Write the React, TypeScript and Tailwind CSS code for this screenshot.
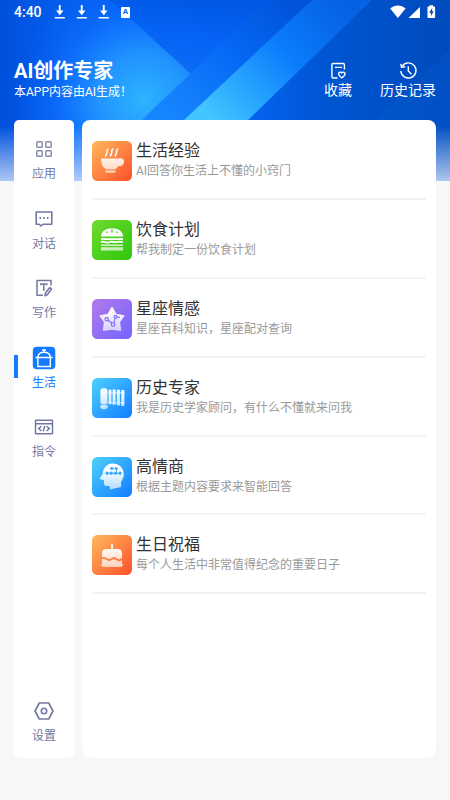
import type { ReactNode } from "react";

interface NavItem {
  icon: ReactNode;
  label: string;
}

interface Topic {
  colors: [string, string];
  desc: string;
  glyph: (fill: string, hole: string) => ReactNode;
  id: string;
  title: string;
}

const NAV_ITEMS: NavItem[] = [
  {
    label: "应用",
    icon: (
      <g fill="none" stroke="#8a8fac" strokeWidth="1.5">
        <rect height="5.4" rx="0.8" width="5.4" x="4.8" y="4.8" />
        <rect height="5.4" rx="0.8" width="5.4" x="13.8" y="4.8" />
        <rect height="5.4" rx="0.8" width="5.4" x="4.8" y="13.8" />
        <rect height="5.4" rx="0.8" width="5.4" x="13.8" y="13.8" />
      </g>
    ),
  },
  {
    label: "对话",
    icon: (
      <g fill="none" stroke="#7378a3" strokeWidth="1.6">
        <path d="M4.2 5h15.6v12.2H11l-2 1.8-1.8-1.8h-3z" strokeLinejoin="round" />
        <path d="M8.3 10v2M12 10v2M15.7 10v2" />
      </g>
    ),
  },
  {
    label: "写作",
    icon: (
      <g fill="none" stroke="#7378a3" strokeWidth="1.5">
        <path d="M19 9.5V4.4H5v14.8h6" strokeLinejoin="round" />
        <path d="M8.800 9.200V8h6v1.200M11.800 8v7" />
        <path
          d="m17.800 11.500 1.800 1.300-4.300 6-2.300.9.3-2.400z"
          strokeLinejoin="round"
        />
      </g>
    ),
  },
  {
    label: "生活",
    icon: (
      <>
        <rect fill="#127bff" height="22.5" rx="4" width="22.5" x="0.8" y="0.8" />
        <g fill="none" stroke="#fff" strokeWidth="1.4">
          <path d="M10 4h4M12 4v2.500M5.800 11.200c.3-2.800 2.600-4.900 6.300-4.900s6 2.100 6.300 4.900" />
          <path d="M3.500 11.500h17.200M5.900 11.500v9h12.400v-9" />
        </g>
      </>
    ),
  },
  {
    label: "指令",
    icon: (
      <g fill="none" stroke="#7378a3" strokeWidth="1.5">
        <rect height="13.6" rx="0.6" width="17" x="3.5" y="5.2" />
        <path d="M3.500 8.800h17M9.300 11.200l-2.600 2.400 2.600 2.400M14.700 11.200l2.600 2.400-2.600 2.400M12.800 11l-1.600 5.200" />
      </g>
    ),
  },
];

const TOPICS: Topic[] = [
  {
    id: "life",
    title: "生活经验",
    desc: "AI回答你生活上不懂的小窍门",
    colors: ["#ffb95c", "#fb5029"],
    glyph: (fill) => (
      <>
        <path
          d="M16 8c-2.500 2.300.5 3.500-2.500 7M20.800 8c-2.500 2.300.5 3.500-2.500 7M25.600 8c-2.500 2.300.5 3.500-2.500 7"
          fill="none"
          stroke="#fff"
          strokeLinecap="round"
          strokeWidth="1.6"
        />
        <path
          d="M9 17.500h18c3-.8 5.500 1 5 4-.5 3-3 4-6 3.700-1 2-2.500 3.300-4.500 3.300H16c-4.500 0-7-5-7-11z"
          fill={fill}
        />
        <path d="M13 29.500h11l-1 2.300h-9z" fill={fill} />
      </>
    ),
  },
  {
    id: "diet",
    title: "饮食计划",
    desc: "帮我制定一份饮食计划",
    colors: ["#70da30", "#2fc60c"],
    glyph: (fill, hole) => (
      <>
        <path
          d="M9 16.500C9.500 11 14 8.300 20 8.300s10.700 2.700 11 8.200z"
          fill="#fff"
        />
        <path
          d="M15 12v.5M20 10v2M25 12v.5"
          stroke={hole}
          strokeLinecap="round"
          strokeWidth="1.3"
        />
        <path d="M9 18.200h22v1.800H9z" fill="#fff" />
        <path
          d="M9 22.200c3-2.200 5 1.800 8 0s4 .5 6.500 0 4.500-1 7.500 0"
          fill="none"
          stroke="#fff"
          strokeWidth="1.7"
        />
        <path d="M9 24.600h22v1.500H9zM9 27.300h22v3.200H9z" fill={fill} />
      </>
    ),
  },
  {
    id: "star",
    title: "星座情感",
    desc: "星座百科知识，星座配对查询",
    colors: ["#b17be8", "#7464ff"],
    glyph: (fill, hole) => (
      <>
        <path
          d="M20 8l4.200 7.300 8 1.400-4.500 6.300 1 8.500-8.700-1.200-8.700 1.200 1-8.500-4.500-6.300 8-1.400z"
          fill={fill}
          stroke={fill}
          strokeLinejoin="round"
          strokeWidth="0.8"
        />
        <path
          d="m14.700 20.300 6.600 5 2.400-7.600 4.300.8"
          fill="none"
          stroke={hole}
          strokeWidth="1.1"
        />
        <g fill="#e9e4ff" stroke={hole} strokeWidth="1.1">
          <circle cx="14.700" cy="20.300" r="1.700" />
          <circle cx="21" cy="25.500" r="1.700" />
          <circle cx="23.500" cy="17.700" r="1.500" />
        </g>
      </>
    ),
  },
  {
    id: "history",
    title: "历史专家",
    desc: "我是历史学家顾问，有什么不懂就来问我",
    colors: ["#4ed1ff", "#127cff"],
    glyph: (fill) => (
      <>
        <rect fill={fill} height="16" rx="2.5" width="7" x="8.4" y="10.3" />
        <ellipse cx="12" cy="28.8" fill={fill} rx="3.800" ry="2.400" />
        <path d="M15.400 14h17v1.500h-17zM15.400 24h17v1.500h-17z" fill="#fff" opacity="0.5" />
        <path
          d="M16.600 11.800h2.800v14.400h-2.800zM20.600 11.500h3v15.200h-3zM24.900 11.800h3v15.600h-3zM29.200 12h3.200v16h-3.200z"
          fill={fill}
        />
      </>
    ),
  },
  {
    id: "eq",
    title: "高情商",
    desc: "根据主题内容要求来智能回答",
    colors: ["#4ed1ff", "#127cff"],
    glyph: (fill) => (
      <>
        <path
          d="M20.500 6.500c6.500 0 11.300 4.500 11.300 10.500 0 5-2.500 6-2.700 9v4L18 32.500l-.5-3.500c-3 .3-5.500 0-5.500-2v-3.500l-4.500-1.700 3.300-4.800c.2-6 4.200-10.500 9.700-10.500z"
          fill={fill}
        />
        <g fill="#30a5ff" stroke="#30a5ff">
          <path d="M15 16.300h14M19.500 11.500h5v4.800" fill="none" strokeWidth="0.8" />
          <path
            d="M14 15.200h2v2h-2zM18.200 15.200h2v2h-2zM22.700 15.200h2v2h-2zM27 15.200h2v2h-2zM18.700 10.700h2v1.600h-2zM23.500 10.700h1.800v1.600h-1.800z"
            strokeWidth="0.8"
          />
        </g>
      </>
    ),
  },
  {
    id: "birthday",
    title: "生日祝福",
    desc: "每个人生活中非常值得纪念的重要日子",
    colors: ["#ffb95c", "#fb5029"],
    glyph: (fill) => (
      <>
        <path d="M20 8.500c1.500 1.700 1 2.500.8 3V14h-1.600v-2.500c-.4-.7-.5-1.500.8-3z" fill="#fff" />
        <path
          d="M10 22.500V18c0-2.500 1.500-4 4-4h12c2.500 0 4 1.500 4 4v4.500c-2 3-4.500 1.500-6.500 0-2.500-1.500-4 2-6.500 1.500S13 21 10 22.500z"
          fill={fill}
        />
        <path
          d="M10 24.500c3-1.500 4.500 1.500 7 1.500s4-2.700 6.500-1.200 4.500 2 6.500.2v4h1.300c-.3 2-1.300 3-3.300 3H12c-2 0-3-1-3.300-3H10z"
          fill={fill}
        />
      </>
    ),
  },
];

function Backdrop() {
  return (
    <svg
      aria-hidden="true"
      className="absolute inset-0 h-full w-full"
      preserveAspectRatio="none"
      viewBox="0 0 450 181"
    >
      <defs>
        <linearGradient id="sky" x1="0" x2="1" y1="0" y2="0">
          <stop offset="0" stopColor="#0050dc" />
          <stop offset="0.15" stopColor="#045ff0" />
          <stop offset="0.5" stopColor="#0568fa" />
          <stop offset="0.72" stopColor="#0056d2" />
          <stop offset="1" stopColor="#004abd" />
        </linearGradient>
        <radialGradient
          cx="143"
          cy="100"
          gradientUnits="userSpaceOnUse"
          id="glow"
          r="130"
        >
          <stop offset="0" stopColor="#2db4ff" />
          <stop offset="0.35" stopColor="#2499ff" stopOpacity="0.9" />
          <stop offset="0.7" stopColor="#0f6eff" stopOpacity="0.6" />
          <stop offset="1" stopColor="#0560f2" stopOpacity="0" />
        </radialGradient>
        <linearGradient
          gradientUnits="userSpaceOnUse"
          id="wedge"
          x1="200"
          x2="190"
          y1="0"
          y2="75"
        >
          <stop offset="0" stopColor="#0058e4" />
          <stop offset="0.5" stopColor="#0563f6" />
          <stop offset="1" stopColor="#0d6cf5" />
        </linearGradient>
        <linearGradient
          gradientUnits="userSpaceOnUse"
          id="band"
          x1="290"
          x2="160"
          y1="0"
          y2="120"
        >
          <stop offset="0" stopColor="#0052d8" />
          <stop offset="0.45" stopColor="#0569f5" />
          <stop offset="0.8" stopColor="#147efb" />
          <stop offset="1" stopColor="#1687ff" />
        </linearGradient>
        <linearGradient
          gradientUnits="userSpaceOnUse"
          id="beam"
          x1="335"
          x2="205"
          y1="0"
          y2="125"
        >
          <stop offset="0" stopColor="#0562e2" />
          <stop offset="0.4" stopColor="#0b7cfc" />
          <stop offset="0.7" stopColor="#27a5ff" />
          <stop offset="0.95" stopColor="#42c6ff" />
        </linearGradient>
        <linearGradient id="fade" x1="0" x2="0" y1="0" y2="1">
          <stop offset="0" stopColor="#f7f9ff" stopOpacity="0" />
          <stop offset="1" stopColor="#f7f9ff" stopOpacity="0.7" />
        </linearGradient>
      </defs>
      <path d="M0 0h450v181H0z" fill="url(#sky)" />
      <path d="M0 0h270L155 110 100 181H0z" fill="url(#glow)" />
      <path d="M110 0h160l-79 74z" fill="url(#wedge)" />
      <path d="M270 0h42L185 119l-66 62H82l73-74z" fill="url(#band)" />
      <path d="M312 0h60L248 120l-60 61h-69l66-62z" fill="url(#beam)" />
      <path d="M450 50v131H310z" fill="#075bd2" opacity="0.35" />
      <path d="M0 126h450v55H0z" fill="url(#fade)" />
    </svg>
  );
}

function StatusBar() {
  return (
    <div className="flex h-6 items-center px-[14px]">
      <span className="w-[40px] font-medium text-[14px] leading-6">4:40</span>
      <div className="flex items-center gap-[10px]">
        {[0, 1, 2].map((n) => (
          <svg aria-hidden="true" className="h-4 w-3" key={n} viewBox="0 0 12 16">
            <path
              d="M4.800 1h1.900v5.500h2.800L5.800 11.200 2 6.500h2.800zM0.800 13h10v1.400h-10z"
              fill="#fff"
            />
          </svg>
        ))}
        <span className="ml-px flex h-[11px] w-[9px] items-center justify-center rounded-[1px] bg-white font-bold text-[#0867ef] text-[8px] leading-none">
          A
        </span>
      </div>
      <svg aria-hidden="true" className="ml-auto h-4 w-[46px]" viewBox="0 0 46 16">
        <g fill="#fff">
          <path d="M0.200 4.500c4.500-3.900 10.900-3.900 15.400 0L7.900 14z" />
          <path d="M30 3v11H18.500z" />
          <path d="M39.500 2.500V1.200h3.600v1.300h1.200c.5 0 .8.3.8.8v9.900c0 .5-.3.800-.8.800h-6c-.5 0-.8-.3-.8-.8V3.300c0-.5.300-.8.800-.8z" />
        </g>
        <path d="m42.300 3.800-3.100 4.900h1.700v3.600l2.800-5h-1.700z" fill="#0049b5" />
      </svg>
    </div>
  );
}

function Header() {
  return (
    <div className="flex items-start justify-between px-[14px] pt-[34px]">
      <div className="flex flex-col">
        <h1 className="font-bold text-[20px] leading-[26px]">AI创作专家</h1>
        <p className="text-xs leading-4">本APP内容由AI生成！</p>
      </div>
      <div className="flex gap-7 pt-[3px] text-sm leading-5">
        <button className="flex flex-col items-center" type="button">
          <svg
            aria-hidden="true"
            className="h-[19px] w-[19px]"
            fill="none"
            stroke="#fff"
            strokeWidth="1.4"
            viewBox="0 0 19 19"
          >
            <path d="M15.400 8.500V3.700c0-.8-.4-1.200-1.200-1.200H4.100c-.8 0-1.200.4-1.200 1.200v12.100c0 .8.4 1.200 1.200 1.200h4.400M6 6.400h7" />
            <path d="M12.800 11.800c-1-1.300-3.300-.6-3.200 1.200.1 1.700 1.700 2.900 3.200 3.800 1.500-.9 3.200-2.100 3.300-3.800.1-1.800-2.300-2.500-3.300-1.200z" />
          </svg>
          收藏
        </button>
        <button className="flex flex-col items-center" type="button">
          <svg
            aria-hidden="true"
            className="h-[19px] w-[19px]"
            fill="none"
            stroke="#fff"
            strokeWidth="1.4"
            viewBox="0 0 19 19"
          >
            <path d="M3 5.300A7.600 7.600 0 1 1 1.800 10" />
            <path d="M1.800 2.800 2.500 6.200l3.700-.4M9.300 5.200V10l3.200 3.200" />
          </svg>
          历史记录
        </button>
      </div>
    </div>
  );
}

function Sidebar({ active }: { active: string }) {
  return (
    <nav className="flex w-[60px] flex-col rounded-[5px] bg-white pt-[17px] pb-[14px] text-[#7378a3] text-xs">
      <div className="flex flex-col gap-[24.5px]">
        {NAV_ITEMS.map((item) => (
          <div
            className="relative flex h-[45px] flex-col items-center justify-between leading-4"
            key={item.label}
          >
            {item.label === active && (
              <span className="absolute top-[9px] left-0 h-[23px] w-1 bg-[#127bff]" />
            )}
            <svg aria-hidden="true" className="h-6 w-6" viewBox="0 0 24 24">
              {item.icon}
            </svg>
            <span className={item.label === active ? "text-[#127bff]" : ""}>
              {item.label}
            </span>
          </div>
        ))}
      </div>
      <div className="mt-auto flex h-[45px] flex-col items-center justify-between leading-4">
        <svg
          aria-hidden="true"
          className="h-6 w-6"
          fill="none"
          stroke="#7378a3"
          strokeWidth="1.6"
          viewBox="0 0 24 24"
        >
          <path d="M7.300 4h9.400l4.300 8-4.300 8H7.300L3 12z" strokeLinejoin="round" />
          <circle cx="12" cy="12" r="2.700" />
        </svg>
        <span>设置</span>
      </div>
    </nav>
  );
}

function TopicRow({ topic }: { topic: Topic }) {
  const [from, to] = topic.colors;
  const bgId = `bg-${topic.id}`;
  const inkId = `ink-${topic.id}`;

  return (
    <div className="flex h-[78.9px] items-start gap-1 border-[#f3f3f3] border-b-2 pt-5">
      <svg aria-hidden="true" className="h-10 w-10 shrink-0" viewBox="0 0 40 40">
        <defs>
          <linearGradient id={bgId} x1="0" x2="1" y1="0" y2="1">
            <stop offset="0" stopColor={from} />
            <stop offset="1" stopColor={to} />
          </linearGradient>
          <linearGradient
            gradientUnits="userSpaceOnUse"
            id={inkId}
            x1="0"
            x2="0"
            y1="10"
            y2="33"
          >
            <stop offset="0" stopColor="#fff" />
            <stop offset="1" stopColor="#fff" stopOpacity="0.65" />
          </linearGradient>
        </defs>
        <rect fill={`url(#${bgId})`} height="40" rx="5.5" width="40" />
        {topic.glyph(`url(#${inkId})`, to)}
      </svg>
      <div className="min-w-0 flex-1">
        <h2 className="text-[#333] text-base leading-5">{topic.title}</h2>
        <p className="text-[#999] text-xs leading-5">{topic.desc}</p>
      </div>
    </div>
  );
}

export default function App() {
  return (
    <div className="relative flex h-[800px] w-[450px] flex-col overflow-hidden bg-[#f7f7f7] font-['Roboto','Noto_Sans_CJK_SC',sans-serif]">
      <div className="absolute inset-x-0 top-0 h-[181px]">
        <Backdrop />
      </div>
      <div className="relative h-[120px] shrink-0 text-white">
        <StatusBar />
        <Header />
      </div>
      <div className="relative flex h-[638px] gap-2 px-[14px]">
        <Sidebar active="生活" />
        <main className="flex-1 rounded-lg bg-white px-[10px] pt-px">
          {TOPICS.map((topic) => (
            <TopicRow key={topic.id} topic={topic} />
          ))}
        </main>
      </div>
    </div>
  );
}
